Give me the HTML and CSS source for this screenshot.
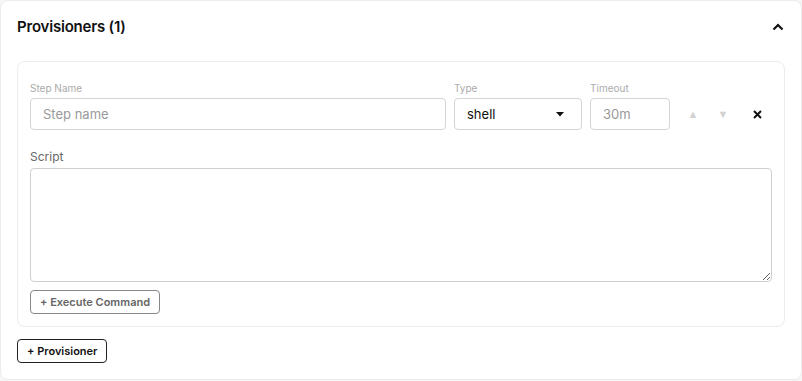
FILE: index.html
```html
<!DOCTYPE html>
<html lang="en">
<head>
    <meta charset="UTF-8">
    <meta name="viewport" content="width=device-width, initial-scale=1.0">
    <title>Provisioners</title>
    <link rel="stylesheet" href="styles.css">
</head>
<body>
    <section class="panel">
        <div class="panel-header">
            <h2>Provisioners (1)</h2>
            <button class="collapse-btn" type="button" aria-label="Collapse">
                <svg width="12" height="8" viewBox="0 0 12 8"><path d="M1.5 6.5 L6 2 L10.5 6.5" fill="none" stroke="#111" stroke-width="2.2"/></svg>
            </button>
        </div>

        <div class="step-card">
            <div class="step-row">
                <div class="field field-name">
                    <label>Step Name</label>
                    <input type="text" placeholder="Step name">
                </div>
                <div class="field field-type">
                    <label>Type</label>
                    <div class="select">
                        <span>shell</span>
                        <svg width="8" height="5" viewBox="0 0 8 5"><path d="M0 0 H8 L4 4.5 Z" fill="#111"/></svg>
                    </div>
                </div>
                <div class="field field-timeout">
                    <label>Timeout</label>
                    <input type="text" placeholder="30m">
                </div>
                <div class="step-actions">
                    <button class="icon-btn muted" type="button">&#9650;</button>
                    <button class="icon-btn muted" type="button">&#9660;</button>
                    <button class="icon-btn remove" type="button" aria-label="Remove">
                        <svg width="9" height="9" viewBox="0 0 9 9"><path d="M1 1 L8 8 M8 1 L1 8" stroke="#111" stroke-width="2"/></svg>
                    </button>
                </div>
            </div>

            <label class="script-label">Script</label>
            <textarea class="script"></textarea>

            <button class="btn btn-secondary" type="button">+ Execute Command</button>
        </div>

        <button class="btn btn-primary" type="button">+ Provisioner</button>
    </section>
</body>
</html>
```

FILE: styles.css
```css
:root {
    --text-color: #111;
    --muted: #aaa;
    --border: #ececec;
    --input-border: #d4d4d4;
    --font-family: Inter, "Liberation Sans", Arial, sans-serif;
}

* {
    box-sizing: border-box;
    margin: 0;
    padding: 0;
}

body {
    font-family: var(--font-family);
    background-color: #f6f6f6;
    color: var(--text-color);
}

.panel {
    width: 802px;
    height: 380px;
    padding: 16px;
    background-color: #fff;
    border: 1px solid var(--border);
    border-radius: 8px;
}

.panel-header {
    display: flex;
    align-items: center;
    justify-content: space-between;
    height: 20px;
    margin-bottom: 24px;
}

h2 {
    font-size: 15px;
    font-weight: 600;
    line-height: 20px;
    letter-spacing: -0.2px;
}

.collapse-btn {
    border: none;
    background: none;
    width: 14px;
    height: 20px;
    display: flex;
    align-items: center;
    justify-content: center;
}

.step-card {
    border: 1px solid var(--border);
    border-radius: 8px;
    padding: 18px 12px 12px;
    margin-bottom: 12px;
}

.step-row {
    display: flex;
    align-items: flex-end;
    gap: 8px;
    margin-bottom: 18px;
}

.field {
    display: flex;
    flex-direction: column;
}

.field label {
    font-size: 10px;
    line-height: 16px;
    color: var(--muted);
    margin-bottom: 2px;
}

.field-name {
    flex: 1;
}

.field-type {
    width: 128px;
}

.field-timeout {
    width: 80px;
}

input, .select {
    height: 32px;
    border: 1px solid var(--input-border);
    border-radius: 4px;
    padding: 0 12px;
    font-family: var(--font-family);
    font-size: 13px;
    color: var(--text-color);
    outline: none;
    width: 100%;
}

input::placeholder {
    color: #999;
}

.select {
    display: flex;
    align-items: center;
    justify-content: space-between;
    padding: 0 17px 0 12px;
}

.step-actions {
    display: flex;
    align-items: center;
    height: 32px;
}

.icon-btn {
    width: 30px;
    height: 32px;
    border: none;
    background: none;
    font-size: 11px;
    display: flex;
    align-items: center;
    justify-content: center;
}

.icon-btn.muted {
    color: #d2d2d2;
}

.icon-btn.remove {
    margin-left: 4px;
}

.script-label {
    display: block;
    font-size: 12px;
    line-height: 18px;
    color: #666;
    margin-bottom: 2px;
}

.script {
    display: block;
    width: 100%;
    height: 114px;
    border: 1px solid #cfcfcf;
    border-radius: 4px;
    margin-bottom: 8px;
    font-family: var(--font-family);
    resize: vertical;
}

.btn {
    display: block;
    height: 24px;
    padding: 0 9px;
    border-radius: 4px;
    background: #fff;
    font-family: var(--font-family);
    font-size: 11px;
    font-weight: 600;
}

.btn-secondary {
    border: 1px solid #888;
    color: #666;
}

.btn-primary {
    border: 1px solid #222;
    color: var(--text-color);
}
```
